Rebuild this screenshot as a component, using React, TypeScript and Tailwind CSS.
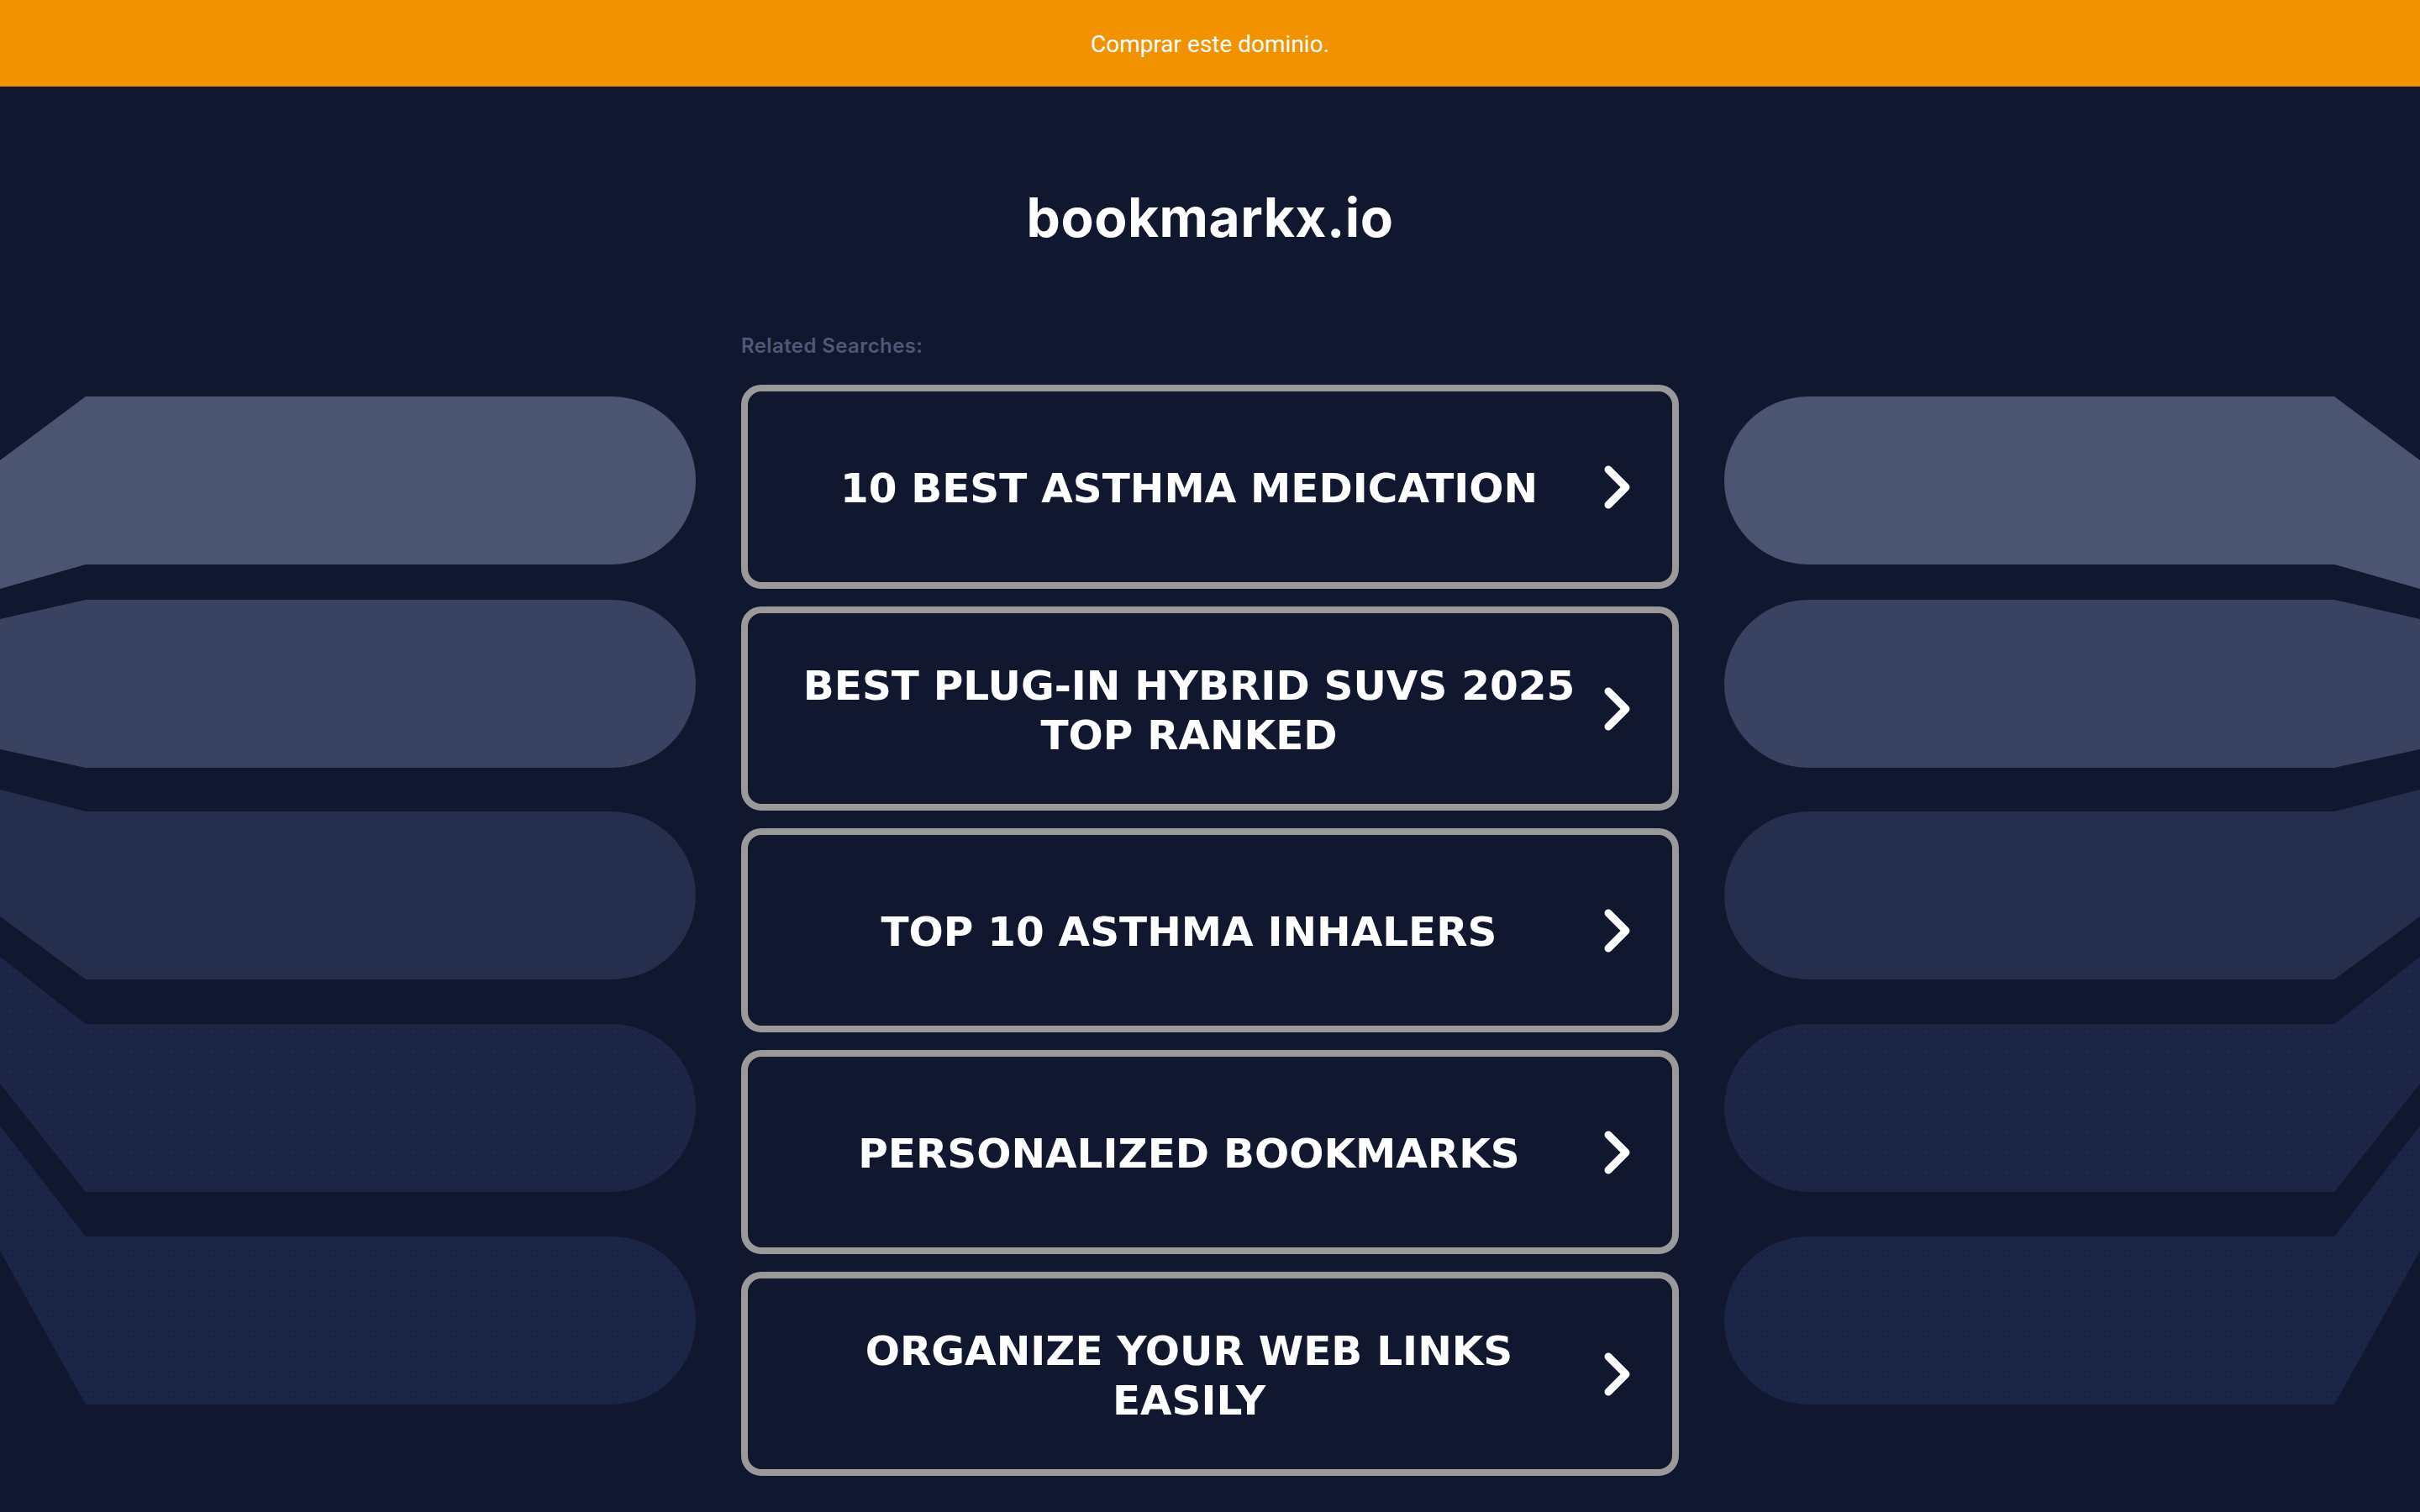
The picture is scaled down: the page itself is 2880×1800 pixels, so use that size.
import React from 'react'

const searches = [
  '10 BEST ASTHMA MEDICATION',
  'BEST PLUG-IN HYBRID SUVS 2025 TOP RANKED',
  'TOP 10 ASTHMA INHALERS',
  'PERSONALIZED BOOKMARKS',
  'ORGANIZE YOUR WEB LINKS EASILY',
]

// side tabs: top of the pill, where the slanted edges meet the screen edge, fill
const tabs = [
  { top: 0, l1: 76, l2: 229, fill: '#4b5572', dots: false },
  { top: 242, l1: 265, l2: 420, fill: '#394261', dots: false },
  { top: 494, l1: 468, l2: 619, fill: '#252e4d', dots: false },
  { top: 747, l1: 667, l2: 818, fill: '#1d2646', dots: true },
  { top: 1000, l1: 868, l2: 1017, fill: '#1b2548', dots: true },
]

function Tabs({ id, flip }: { id: string; flip?: boolean }) {
  return (
    <svg width="828" height="1200" viewBox="0 0 828 1200" className={flip ? '-scale-x-100 block' : 'block'}>
      <defs>
        <pattern id={id} width="6" height="6" patternUnits="userSpaceOnUse">
          <circle cx="3" cy="3" r="0.8" fill="#0e1430" opacity="0.55" />
        </pattern>
      </defs>
      {tabs.map((t, i) => {
        const d = `M102 ${t.top} H728 A100 100 0 0 1 728 ${t.top + 200} H102 L0 ${t.l2} L0 ${t.l1} Z`
        return (
          <g key={i}>
            <path d={d} fill={t.fill} />
            {t.dots && <path d={d} fill={`url(#${id})`} />}
          </g>
        )
      })}
    </svg>
  )
}

function Chevron() {
  return (
    <svg width="40" height="60" viewBox="0 0 40 60" className="shrink-0">
      <path d="M9 9 L30 30 L9 51" fill="none" stroke="#ffffff" strokeWidth="9" strokeLinecap="round" strokeLinejoin="round" />
    </svg>
  )
}

export default function App() {
  return (
    <div className="min-h-[1800px] w-full bg-[#11172e] overflow-hidden">
      <div className="h-[103px] bg-[#f39200] flex items-center justify-center">
        <a className="pt-[2px] text-white text-[28px] font-['Roboto',sans-serif]">Comprar este dominio.</a>
      </div>

      <div className="flex gap-[54px] justify-center">
        <div className="w-[828px] shrink-0 pt-[369px]">
          <Tabs id="dots-left" />
        </div>

        <div className="w-[1116px] shrink-0 flex flex-col">
          <h1 className="mt-[117px] text-center text-white text-[64px] leading-[78px] font-bold font-['Inter',sans-serif] tracking-[0.5px]">
            bookmarkx.io
          </h1>
          <p className="mt-[100px] text-[24px] leading-[28px] font-semibold text-[#4f5878] font-['Inter',sans-serif] tracking-[0.4px]">
            Related Searches:
          </p>
          <div className="mt-[32px] flex flex-col gap-[21px]">
            {searches.map(s => (
              <a
                key={s}
                className="h-[243px] border-[8px] border-[#9a9a9a] rounded-[24px] bg-[#11172e] flex items-center pl-[45px] pr-[45px]"
              >
                <span className="w-[960px] shrink-0 pt-[4px] text-center text-white text-[48.5px] leading-[59px] font-bold font-['DejaVu_Sans',sans-serif]">
                  {s}
                </span>
                <span className="w-[10px] shrink-0" />
                <Chevron />
              </a>
            ))}
          </div>
        </div>

        <div className="w-[828px] shrink-0 pt-[369px]">
          <Tabs id="dots-right" flip />
        </div>
      </div>
    </div>
  )
}
